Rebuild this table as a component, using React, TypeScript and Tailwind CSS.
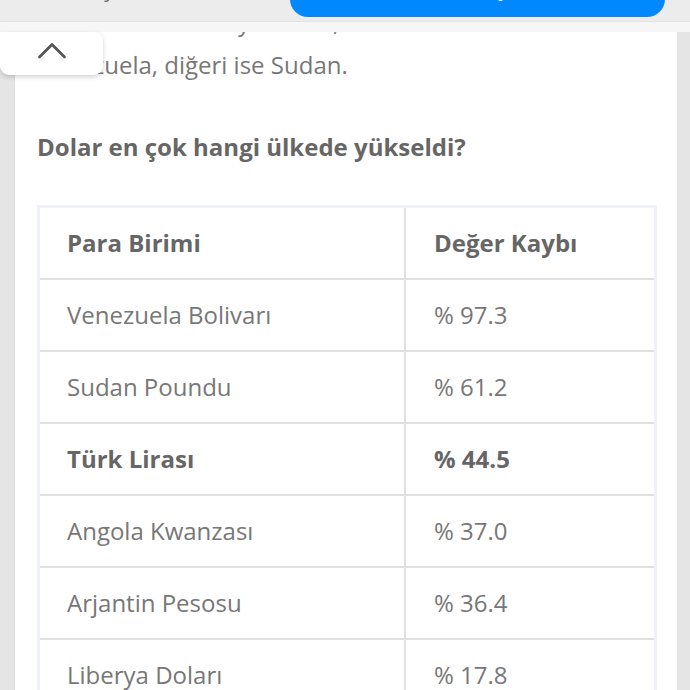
import React from "react";

const rows = [
  { name: "Venezuela Bolivarı", value: "% 97.3" },
  { name: "Sudan Poundu", value: "% 61.2" },
  { name: "Türk Lirası", value: "% 44.5", bold: true },
  { name: "Angola Kwanzası", value: "% 37.0" },
  { name: "Arjantin Pesosu", value: "% 36.4" },
  { name: "Liberya Doları", value: "% 17.8" },
];

function TopBar() {
  return (
    <div className="absolute left-0 right-0 top-0 z-20 h-[32px]">
      <div className="relative h-[22px] overflow-hidden border-b border-[#e2e2e2] bg-[#ececec]">
        <span className="absolute left-[81px] top-[-20px] text-[20px] leading-[20px] text-[#666]">
          Kayıt
        </span>
        <div className="absolute left-[290px] top-[-30px] flex h-[47px] w-[375px] items-end justify-center rounded-[18px] bg-[#0088ff] pb-[20px] pl-[12px]">
          <span className="translate-y-[2px] text-[20px] font-semibold leading-[20px] text-white">
            Giriş
          </span>
        </div>
      </div>
      <div className="h-[10px] bg-[#f6f6f6]" />
    </div>
  );
}

function ScrollTop() {
  return (
    <button
      aria-label="Yukarı çık"
      className="absolute left-0 top-[32px] z-30 flex h-[43px] w-[103px] items-center justify-center rounded-b-[9px] rounded-tr-[9px] bg-white shadow-[0_2px_5px_rgba(0,0,0,0.18)]"
    >
      <svg width="30" height="17" viewBox="0 0 30 17" fill="none" className="-mt-[7px]">
        <path d="M2.5 15 L15 2.5 L27.5 15" stroke="#555" strokeWidth="2.8" strokeLinecap="round" strokeLinejoin="round" />
      </svg>
    </button>
  );
}

export default function App() {
  return (
    <div className="relative h-[690px] w-[690px] overflow-hidden bg-[#e5e5e5] font-['Open_Sans',sans-serif]">
      <TopBar />
      <ScrollTop />

      <div className="flex h-full pl-[14px] pr-[13px]">
        <div className="h-full flex-1 border-l border-[#dedede] bg-white pl-[22px] pr-[20px]">
          {/* article text, first line sits under the bar */}
          <p className="text-[24px] leading-[43px] text-[#777]">
            <span className="block whitespace-nowrap">Listenin sırasında yer alanı, bunlardan biri</span>
            <span className="block whitespace-nowrap">Venezuela, diğeri ise Sudan.</span>
          </p>

          <h2 className="mt-[46px] text-[24px] font-bold leading-[30px] text-[#666]">
            Dolar en çok hangi ülkede yükseldi?
          </h2>

          <div className="mt-[43px] border-[3px] border-b-0 border-[#eef1f6]">
            <div className="grid grid-cols-[366px_1fr] text-[24px] text-[#777]">
              <div className="flex h-[72px] items-center border-b-2 border-r-2 border-[#e0e0e0] px-[27px] font-bold text-[#666]">
                Para Birimi
              </div>
              <div className="flex h-[72px] items-center border-b-2 border-[#e0e0e0] px-[28px] font-bold text-[#666]">
                Değer Kaybı
              </div>
              {rows.map((r) => (
                <React.Fragment key={r.name}>
                  <div
                    className={`flex h-[72px] items-center border-b-2 border-r-2 border-[#e0e0e0] px-[27px] ${
                      r.bold ? "font-bold text-[#666]" : ""
                    }`}
                  >
                    {r.name}
                  </div>
                  <div
                    className={`flex h-[72px] items-center border-b-2 border-[#e0e0e0] px-[28px] ${
                      r.bold ? "font-bold text-[#666]" : ""
                    }`}
                  >
                    {r.value}
                  </div>
                </React.Fragment>
              ))}
            </div>
          </div>
        </div>
      </div>
    </div>
  );
}
